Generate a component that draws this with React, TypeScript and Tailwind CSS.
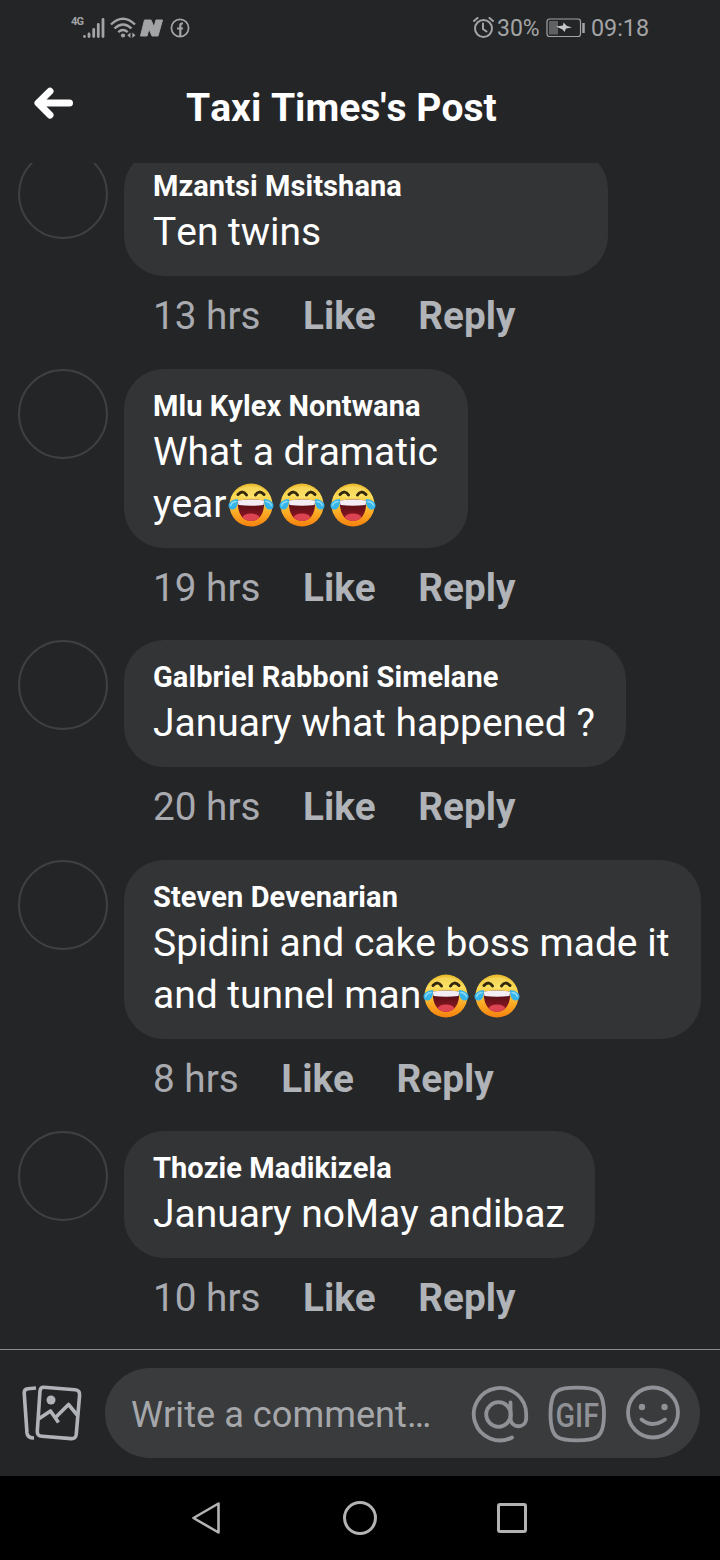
import type { ReactNode } from "react";

type Comment = {
  author: string;
  lines: string[];
  laughs?: number;
  age: string;
  width: string;
};

const comments: Comment[] = [
  { author: "Mzantsi Msitshana", lines: ["Ten twins"], age: "13 hrs", width: "w-[484px]" },
  { author: "Mlu Kylex Nontwana", lines: ["What a dramatic", "year"], laughs: 3, age: "19 hrs", width: "w-[344px]" },
  { author: "Galbriel Rabboni Simelane", lines: ["January what happened ?"], age: "20 hrs", width: "w-[502px]" },
  {
    author: "Steven Devenarian",
    lines: ["Spidini and cake boss made it", "and tunnel man"],
    laughs: 2,
    age: "8 hrs",
    width: "w-[577px]",
  },
  { author: "Thozie Madikizela", lines: ["January noMay andibaz"], age: "10 hrs", width: "w-[471px]" },
];

function LaughEmoji() {
  return (
    <svg viewBox="0 0 46 44" className="mt-[2px] mr-[5px] h-11 w-[46px] shrink-0" role="img" aria-label="😂">
      <defs>
        <linearGradient id="face" x1="0" y1="0" x2="0" y2="1">
          <stop offset="0" stopColor="#eab92c" />
          <stop offset="0.3" stopColor="#fadb58" />
          <stop offset="0.6" stopColor="#fcb52c" />
          <stop offset="1" stopColor="#f5810d" />
        </linearGradient>
        <linearGradient id="mouth" x1="0" y1="0" x2="0" y2="1">
          <stop offset="0" stopColor="#3f0a10" />
          <stop offset="1" stopColor="#9b1a26" />
        </linearGradient>
        <clipPath id="mouthClip">
          <path d="M10 17.500Q23 15.500 36 17.500C37 29 32 38 23 38S9 29 10 17.500Z" />
        </clipPath>
      </defs>
      <circle cx="23" cy="22" r="21.500" fill="url(#face)" />
      <ellipse cx="23" cy="9" rx="13" ry="6" fill="#fff08a" opacity="0.35" />
      <path d="M10 11.500Q15 6.500 18.500 12M27.500 12Q31 6.500 36 11.500" fill="none" stroke="#33280c" strokeWidth="3" strokeLinecap="round" />
      <g clipPath="url(#mouthClip)">
        <rect x="9" y="14" width="28" height="25" fill="url(#mouth)" />
        <ellipse cx="23" cy="35" rx="8.500" ry="4.500" fill="#dd4350" />
        <path d="M9 14H37L35.500 22Q23 23.500 10.500 22Z" fill="#f3edf5" />
      </g>
      <path d="M10 16C5 16 0.500 19 0.500 22.500S3.500 27.500 6.500 26C9.500 24.500 10 20 10 16Z" fill="#35b5ea" />
      <path d="M36 16C41 16 45.500 19 45.500 22.500S42.500 27.500 39.500 26C36.500 24.500 36 20 36 16Z" fill="#35b5ea" />
      <path d="M8 18.500C5 19 3 20.500 2.700 22.500M38 18.500C41 19 43 20.500 43.300 22.500" fill="none" stroke="#8fdcf8" strokeWidth="1.400" strokeLinecap="round" />
    </svg>
  );
}

function StatusBar() {
  return (
    <div className="flex h-14 items-center pr-[71px] pl-[71px] text-[#a3a4a5]">
      <span className="-mt-[13px] w-[12px] text-[11px] leading-[12px] font-bold tracking-[-0.8px]">4G</span>
      <svg viewBox="0 0 22 22" className="h-[22px] w-[22px]" fill="none" stroke="currentColor" strokeWidth="2.800" strokeLinecap="round">
        <path d="M1.500 19.500V19.300M6 19.500V17M10.700 19.500V12.500M15.300 19.500V7.500M20 19.500V2.500" />
      </svg>
      <svg viewBox="0 0 26 22" className="ml-[5px] h-[22px] w-[26px]" fill="none" stroke="currentColor" strokeWidth="2.400">
        <path d="M1 7.500Q13 -4 25 7.500M4.500 11.500Q13 3.500 21.500 11.500M8.300 15.200Q13 11 17.700 15.200" />
        <circle cx="13" cy="18.500" r="2.100" fill="currentColor" stroke="none" />
        <path d="M20.500 15.500V21L17.300 18.300ZM22.300 15.500V21L25.500 18.300Z" fill="currentColor" stroke="none" />
      </svg>
      <svg viewBox="0 0 23 18" className="ml-[4px] h-[18px] w-[23px]" fill="currentColor">
        <path d="M4.500 1H11L14 8L16 1H22.500L18 17H12L9 10L7 17H0.500Z" stroke="currentColor" strokeLinejoin="round" />
      </svg>
      <svg viewBox="0 0 20 20" className="ml-[7px] h-5 w-5" fill="none" stroke="currentColor" strokeWidth="1.700">
        <circle cx="10" cy="10" r="8.600" />
        <path d="M13 5.500H12C10.700 5.500 10.300 6.300 10.300 7.500V18M7 10.500H13" strokeWidth="2.200" />
      </svg>
      <svg viewBox="0 0 22 22" className="ml-auto h-[22px] w-[22px]" fill="none" stroke="currentColor" strokeWidth="2" strokeLinecap="round">
        <circle cx="10.500" cy="11.500" r="8.500" />
        <path d="M10 6.500V12L13.500 14.500M1 4L4.500 1M20 4L16.500 1" />
      </svg>
      <span className="mt-[2px] ml-[2px] w-[43px] text-[23px] leading-7 whitespace-nowrap">30%</span>
      <svg viewBox="0 0 40 20" className="ml-[6px] h-5 w-10" fill="none" stroke="currentColor">
        <rect x="1" y="1" width="33.500" height="17.500" rx="2.500" strokeWidth="1.200" />
        <rect x="3" y="3" width="9" height="13.500" fill="#606163" stroke="none" />
        <path d="M10 8.500L17 7.500L17.500 4.500L21 8L26 9.500L20 10.500L18.500 14L16.500 11.500Z" fill="#c6c7c8" stroke="none" />
        <path d="M37.500 5V15" strokeWidth="2.500" />
      </svg>
      <span className="ml-[5px] w-[58px] text-[23.300px] leading-7 whitespace-nowrap">09:18</span>
    </div>
  );
}

function Header() {
  return (
    <header className="flex h-[107px] items-start pl-[34px]">
      <svg viewBox="0 0 40 32" className="mt-[30.500px] h-8 w-10" fill="none" stroke="#fff" strokeWidth="7" strokeLinecap="round" strokeLinejoin="round">
        <path d="M16 4.200L4 16L16 28M5 16H35.500" />
      </svg>
      <h1 className="mt-[29px] ml-[112px] text-[39px] leading-[46px] font-bold whitespace-nowrap text-white">
        Taxi Times's Post
      </h1>
    </header>
  );
}

function CommentRow({ comment }: { comment: Comment }) {
  const { author, lines, laughs = 0, age, width } = comment;

  return (
    <article className="flex shrink-0 items-start pl-[18px]">
      <div className="h-[90px] w-[90px] shrink-0 rounded-full border-2 border-[#3e4042]" />
      <div className="ml-4">
        <div className={`${width} rounded-[40px] bg-[#333436] px-[29px] pt-5 pb-[18px] whitespace-nowrap text-white`}>
          <h2 className="mb-[3px] text-[29px] leading-[34px] font-bold tracking-[0.070px]">{author}</h2>
          {lines.map((line, i) => (
            <p key={line} className="flex h-[52px] items-center text-[39px] leading-[52px] tracking-[-0.020px]">
              <span className="mr-[2px]">{line}</span>
              {i === lines.length - 1 && Array.from({ length: laughs }, (_, n) => <LaughEmoji key={n} />)}
            </p>
          ))}
        </div>
        <div
          className={`${lines.length > 1 ? "mb-[26px]" : "mb-[27px]"} mt-[14px] flex gap-[42.500px] pl-[29px] text-[38.700px] leading-[52px] text-[#b0b3b8]`}
        >
          <span className="text-[#a8aaaf]">{age}</span>
          <button className="font-bold">Like</button>
          <button className="font-bold">Reply</button>
        </div>
      </div>
    </article>
  );
}

function GalleryIcon() {
  return (
    <svg viewBox="0 0 60 56" className="h-14 w-[60px]" fill="none" stroke="#b0b3b8" strokeWidth="3.600" strokeLinejoin="round">
      <path d="M14 3L6 3.700Q2 4 2.200 8L5 48Q5.500 53 12 53" />
      <path d="M22 2.300L53 4.800Q58 5.300 57.600 10L54.300 49Q54 54 49 53.600L20 51.300Q15 51 15.300 46L18 6Q18.500 2 22 2.300Z" />
      <path d="M16.500 34L28.500 26L36.500 37.500M32.500 33.500L46.500 19.500L56 31" />
      <circle cx="29" cy="15" r="4.500" fill="#b0b3b8" stroke="none" />
    </svg>
  );
}

function ComposerIcon({ className, children }: { className: string; children: ReactNode }) {
  return (
    <svg viewBox="0 0 60 60" className={`mt-[2px] h-[60px] w-[60px] shrink-0 ${className}`} fill="none" stroke="#8f9196" strokeWidth="3.800" strokeLinecap="round">
      {children}
    </svg>
  );
}

function Composer() {
  return (
    <div className="flex h-[127px] shrink-0 items-start border-t border-[#8a8c8e] pt-[18px] pl-[22px]">
      <div className="mt-[17px]">
        <GalleryIcon />
      </div>
      <div className="ml-[23px] flex h-[90px] w-[595px] items-center rounded-full bg-[#3a3b3c] pl-[26px]">
        <span className="mt-1 w-[339px] text-[36.200px] leading-[52px] whitespace-nowrap text-[#a5a7ab]">Write a comment…</span>
        <ComposerIcon className="">
          <path d="M42 53.500A26.200 26.200 0 1 1 56.200 30V34C56.200 45 40.500 45 40.500 34V18.500" />
          <circle cx="28.500" cy="30.500" r="12.300" />
        </ComposerIcon>
        <ComposerIcon className="ml-[17px]">
          <path d="M30 3.700C49 3.700 57 5 57 30S49 56.300 30 56.300S3.500 55 3.500 30S11 3.700 30 3.700Z" />
          <text x="8.500" y="42.500" fill="#8f9196" stroke="none" fontSize="34" fontWeight="500" textLength="43.500" lengthAdjust="spacingAndGlyphs">
            GIF
          </text>
        </ComposerIcon>
        <ComposerIcon className="ml-[17px]">
          <circle cx="29" cy="28.500" r="25" />
          <path d="M17.500 35.500Q28.500 44.500 41 35.500" />
          <circle cx="18" cy="23" r="3.200" fill="#8f9196" stroke="none" />
          <circle cx="40.500" cy="23" r="3.200" fill="#8f9196" stroke="none" />
        </ComposerIcon>
      </div>
    </div>
  );
}

function NavBar() {
  return (
    <nav className="flex h-[84px] shrink-0 items-center bg-black pl-[190px]">
      <svg viewBox="0 0 32 36" className="h-9 w-8" fill="none" stroke="#b3b3b3" strokeWidth="2.600" strokeLinejoin="round">
        <path d="M28.500 3.500V32.500L3.500 18Z" />
      </svg>
      <div className="ml-[121px] h-[34px] w-[34px] rounded-full border-[3px] border-[#b3b3b3]" />
      <div className="ml-[120px] h-[30px] w-[30px] rounded-[3px] border-[3px] border-[#b3b3b3]" />
    </nav>
  );
}

export default function App() {
  return (
    <div className="flex h-[1560px] w-[720px] flex-col overflow-hidden bg-[#242527] font-['Roboto',sans-serif] [font-kerning:none]">
      <StatusBar />
      <Header />
      <main className="flex h-[1186px] shrink-0 flex-col overflow-hidden">
        <div className="-mt-[14px]">
          {comments.map((comment) => (
            <CommentRow key={comment.author} comment={comment} />
          ))}
        </div>
      </main>
      <Composer />
      <NavBar />
    </div>
  );
}
